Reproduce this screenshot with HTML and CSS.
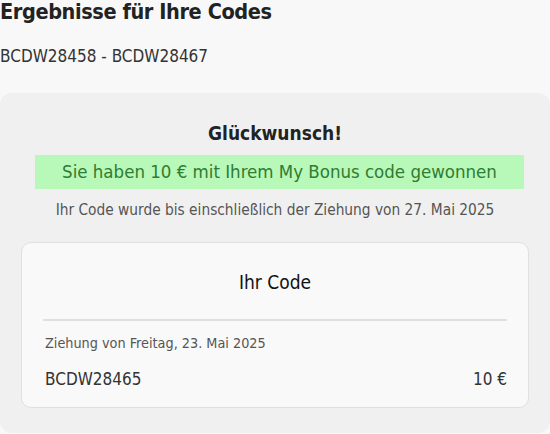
FILE: index.html
```html
<!DOCTYPE html>
<html lang="de">
  <head>
    <meta charset="UTF-8" />
    <title>Ergebnisse</title>
    <link rel="stylesheet" href="styles.css">
  </head>
  <body>
    <div class="results">
      <h1>Ergebnisse für Ihre Codes</h1>
      <p class="range">BCDW28458 - BCDW28467</p>
      <div class="summary">
        <h2>Glückwunsch!</h2>
        <div class="win">Sie haben 10 € mit Ihrem My Bonus code gewonnen</div>
        <p class="note">Ihr Code wurde bis einschließlich der Ziehung von 27. Mai 2025</p>
        <div class="code-card">
          <h3>Ihr Code</h3>
          <p class="draw">Ziehung von Freitag, 23. Mai 2025</p>
          <div class="code-row">
            <span>BCDW28465</span>
            <span>10 €</span>
          </div>
        </div>
      </div>
    </div>
  </body>
</html>
```

FILE: styles.css
```css
body {
  margin: 0;
  background-color: #f8f8f8;
  font-family: "DejaVu Sans Condensed", "DejaVu Sans", sans-serif;
  font-stretch: condensed;
  color: #333;
}

h1 {
  margin: 0;
  font-size: 21.5px;
  font-weight: 600;
  letter-spacing: -0.4px;
  line-height: 24px;
  color: #222;
}

.range {
  margin: 21px 0 0;
  font-size: 17px;
  line-height: 22px;
  color: #333;
}

.summary {
  margin-top: 26px;
  padding: 25px 21px 25px;
  background-color: #f0f0f0;
  border-radius: 12px;
  text-align: center;
}

.summary h2 {
  margin: 0;
  font-size: 19px;
  font-weight: 600;
  line-height: 30px;
  color: #222;
}

.win {
  margin: 7px 5px 0 14px;
  padding: 4px 0;
  background-color: #b8f8b8;
  color: #2e7d32;
  font-size: 18.5px;
  line-height: 26px;
}

.note {
  margin: 9px 0 0;
  font-size: 15.3px;
  line-height: 24px;
  color: #555;
}

.code-card {
  margin-top: 20px;
  padding: 22px 21px 16px;
  background-color: #f9f9f9;
  border: 1px solid #e0e0e0;
  border-radius: 10px;
  text-align: left;
}

.code-card h3 {
  margin: 0;
  padding-bottom: 20px;
  border-bottom: 2px solid #e0e0e0;
  text-align: center;
  font-size: 19px;
  font-weight: 500;
  line-height: 34px;
  color: #111;
}

.draw {
  margin: 11px 0 0;
  padding-left: 2px;
  font-size: 14.3px;
  line-height: 22px;
  color: #555;
}

.code-row {
  display: flex;
  justify-content: space-between;
  margin-top: 13px;
  padding-left: 2px;
  font-size: 17px;
  line-height: 24px;
  color: #333;
}
```
